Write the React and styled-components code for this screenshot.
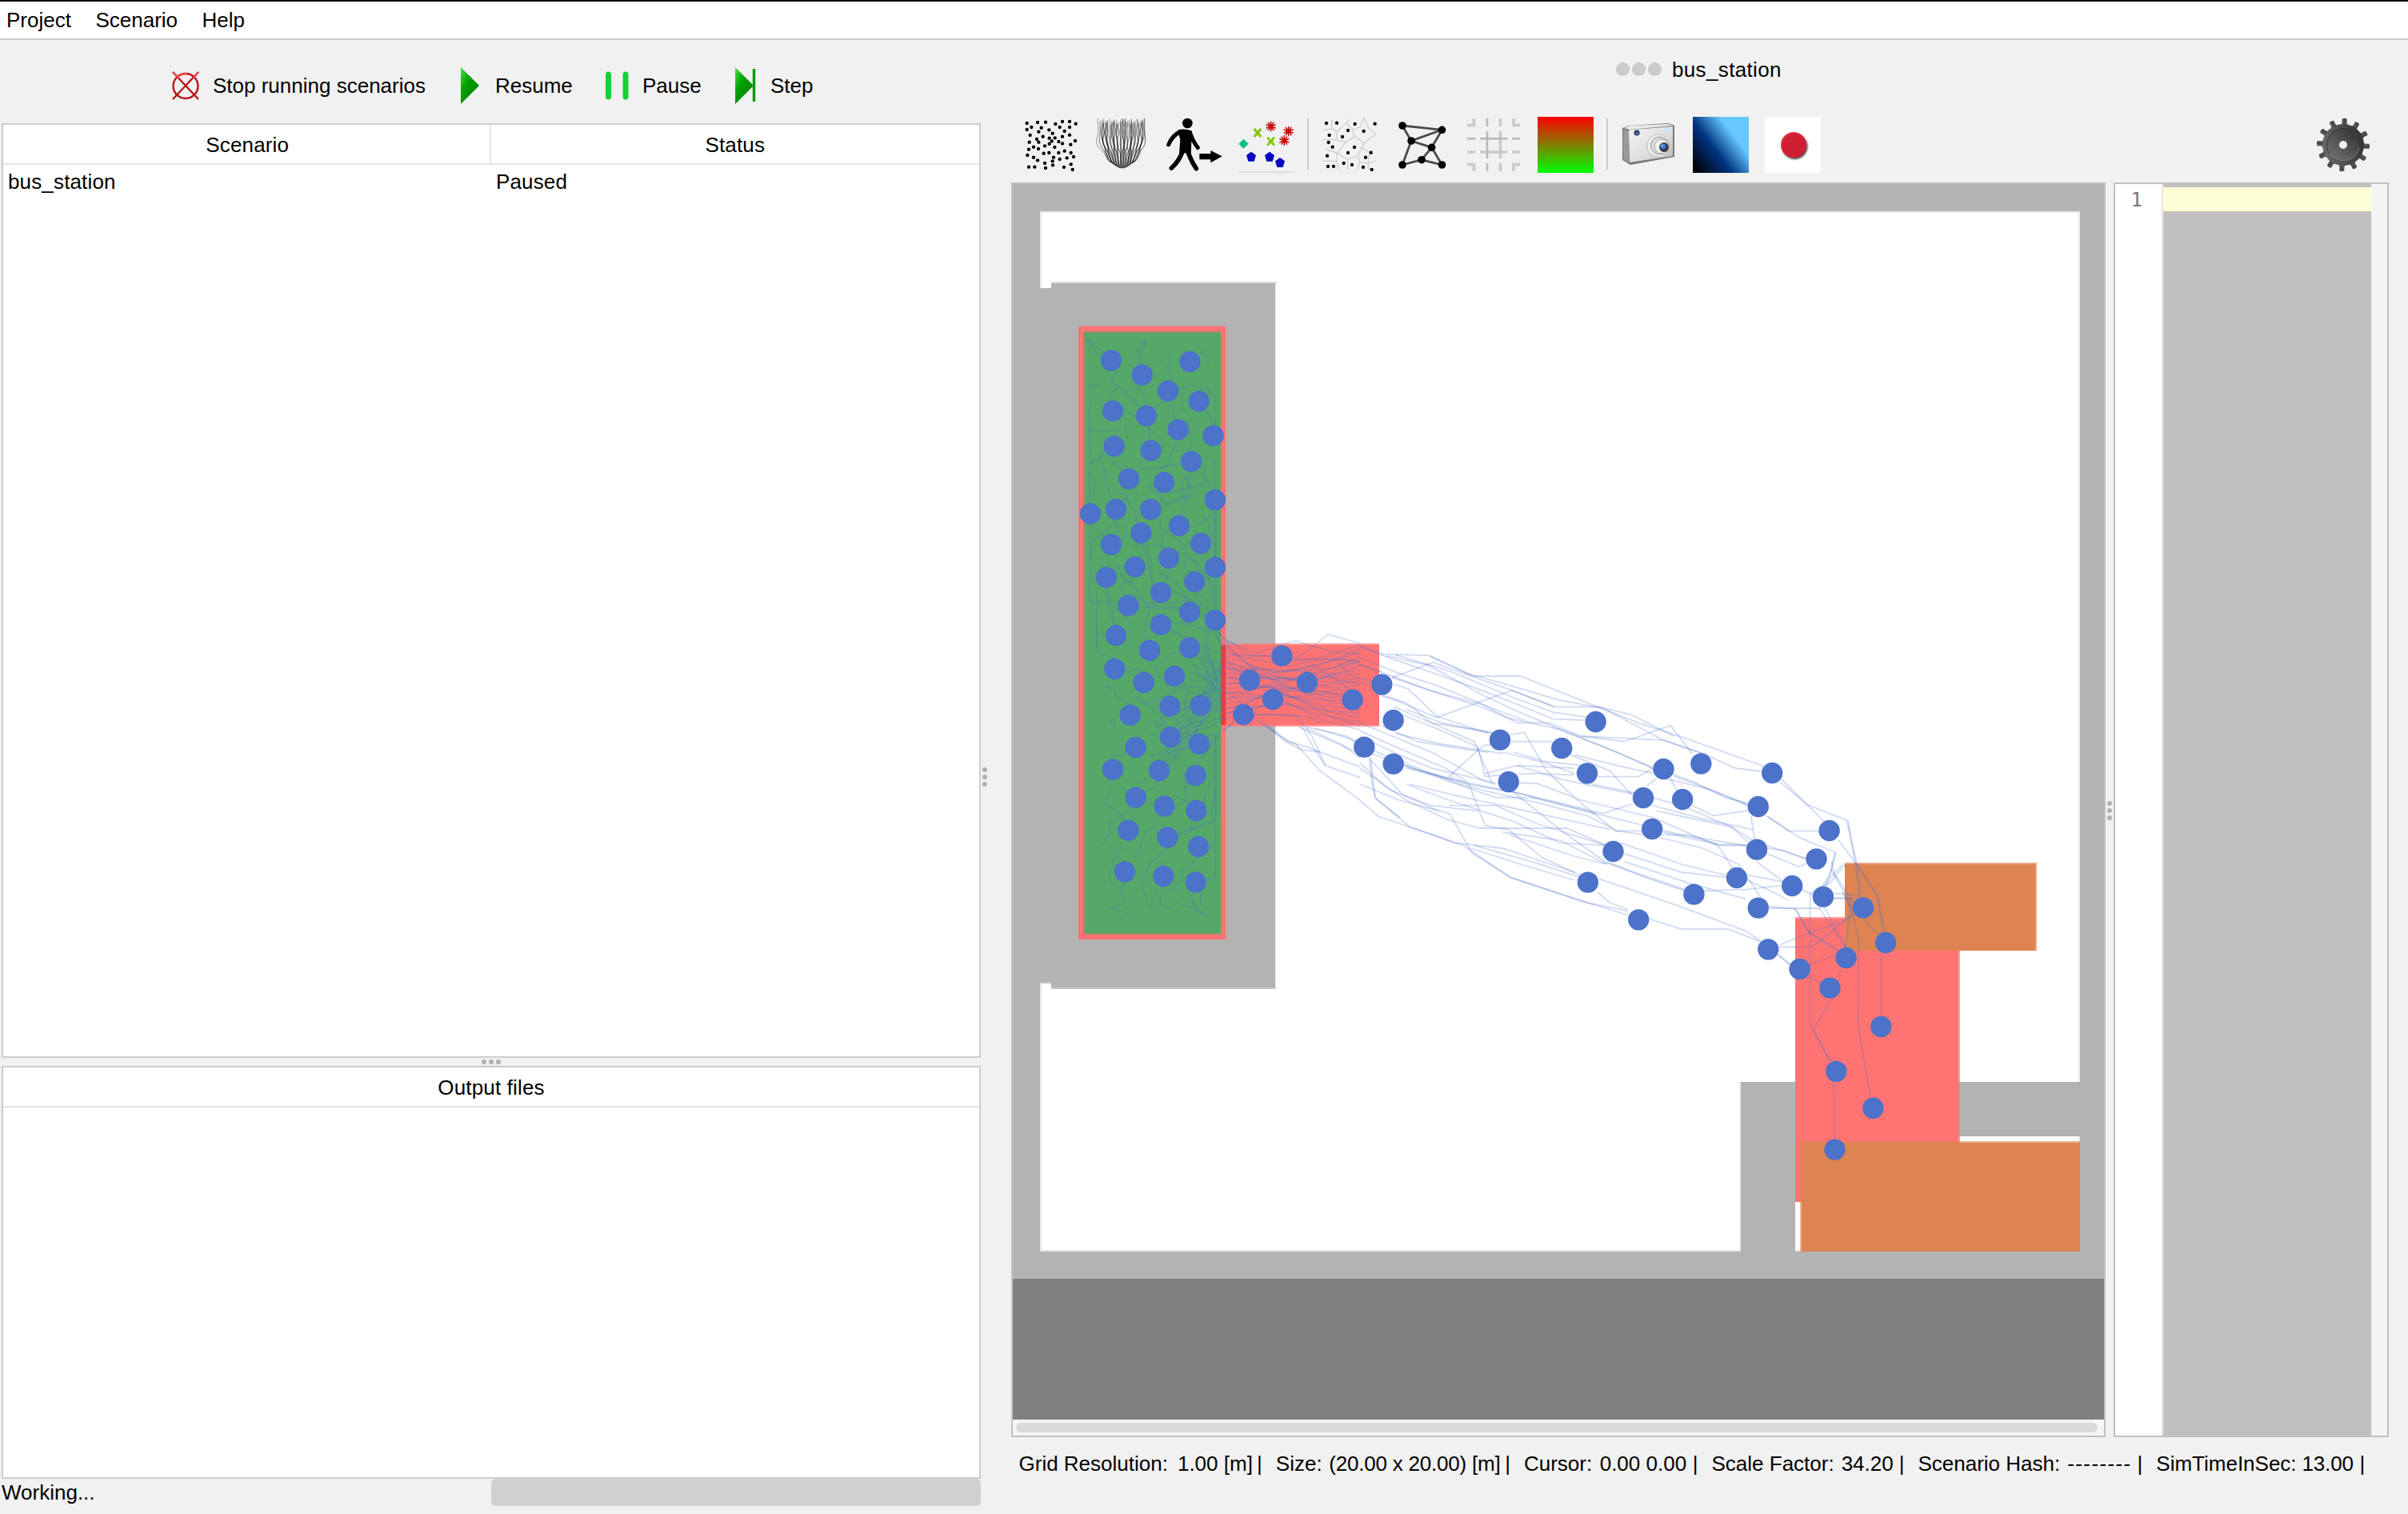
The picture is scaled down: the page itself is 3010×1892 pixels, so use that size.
import React from "react";
import styled, { createGlobalStyle } from "styled-components";

const GlobalStyle = createGlobalStyle`
  html, body { margin: 0; padding: 0; background: #f1f1f1; }
  * { box-sizing: border-box; }
`;

const Window = styled.div`
  width: 3010px;
  height: 1892px;
  overflow: hidden;
  display: flex;
  flex-direction: column;
  background: #f1f1f1;
  border-top: 2px solid #000;
  color: #000;
  font: 26px/30px "Liberation Sans", Arial, sans-serif;
  white-space: pre;
`;

const MenuBar = styled.nav`
  display: flex;
  height: 48px;
  flex: none;
  padding: 8px 0 0 8px;
  gap: 30.5px;
  background: #fff;
  border-bottom: 2px solid #cdcdcd;
`;

const Body = styled.div`
  display: flex;
  flex: 1;
  min-height: 0;
`;

const LeftPane = styled.section`
  width: 1228px;
  padding: 0 2px 0 2px;
  display: flex;
  flex-direction: column;
`;

const RunBar = styled.div`
  height: 104px;
  display: flex;
  align-items: center;
  padding: 10px 0 0 212px;
`;

const RunButton = styled.div`
  display: flex;
  align-items: center;
  width: ${(p) => p.$width}px;
  svg { flex: none; margin-right: ${(p) => p.$gap}px; }
`;

const Table = styled.div`
  height: ${(p) => p.$height}px;
  flex: none;
  display: flex;
  flex-direction: column;
  background: #fff;
  border: 2px solid #cdcdcd;
  letter-spacing: 0.15px;
`;

const HeadRow = styled.div`
  height: 50px;
  display: flex;
  border-bottom: 2px solid #e4e4e4;
`;

const HeadCell = styled.div`
  flex: 1;
  padding-top: 10px;
  text-align: center;
  & + & { border-left: 2px solid #e4e4e4; margin-left: -3px; }
`;

const Row = styled.div`
  display: flex;
  padding-top: 6px;
`;

const Cell = styled.div`
  flex: 1;
  padding-left: 6px;
`;

const SplitHandle = styled.div`
  flex: none;
  display: flex;
  flex-direction: ${(p) => (p.$vertical ? "column" : "row")};
  align-items: center;
  justify-content: center;
  gap: 3px;
  width: ${(p) => (p.$vertical ? p.$size + "px" : "auto")};
  height: ${(p) => (p.$vertical ? "auto" : p.$size + "px")};
  padding-top: ${(p) => p.$shift || 0}px;
  i { width: 6px; height: 6px; border-radius: 3px; background: #b0b0b0; }
`;

const ProgressRow = styled.div`
  display: flex;
  height: 34px;
  span { width: 612px; padding-top: 2px; }
`;

const Progress = styled.div`
  flex: 1;
  height: 34px;
  border-radius: 6px;
  background: #d0d0d0;
`;

const RightPane = styled.section`
  flex: 1;
  padding-left: 30px;
  display: flex;
  flex-direction: column;
`;

const TitleBar = styled.div`
  height: 96px;
  padding: 22px 0 0 756px;
  display: flex;
  gap: 3px;
  letter-spacing: 0.35px;
  i { width: 17px; height: 17px; margin-top: 6px; border-radius: 50%; background: #cbcbcb; }
  span { margin-left: 10px; }
`;

const ToolBar = styled.div`
  height: 82px;
  padding: 0 46px 0 14px;
  display: flex;
  gap: 20px;
  svg { display: block; width: 70px; height: 70px; flex: none; }
`;

const ToolDivider = styled.div`
  width: 2px;
  height: 64px;
  margin: 2px -4px 0;
  background: #cbcbcb;
`;

const Spacer = styled.div`
  flex: 1;
`;

const GradientTile = styled.div`
  width: 70px;
  height: 70px;
  background: ${(p) => p.$fill};
`;

const Views = styled.div`
  display: flex;
  height: 1568px;
`;

const Canvas = styled.div`
  width: 1368px;
  display: flex;
  flex-direction: column;
  border: 2px solid #c0c0c0;
  background: #808080;
  > svg { display: block; }
`;

const ScrollTrack = styled.div`
  height: 20px;
  margin-top: 176px;
  padding: 4px 8px 4px 4px;
  background: #f5f5f5;
`;

const ScrollThumb = styled.div`
  height: 12px;
  border-radius: 6px;
  background: #dbdbdb;
`;

const Editor = styled.div`
  width: 344px;
  display: flex;
  border: 2px solid #c0c0c0;
`;

const Gutter = styled.div`
  width: 59px;
  padding: 6px 24px 0 0;
  text-align: right;
  background: #fff;
  border-right: 1px solid #dcdcdc;
  color: #787878;
  font: 24px/28px "DejaVu Sans Mono", monospace;
`;

const Code = styled.div`
  flex: 1;
  padding-top: 4px;
  margin-left: 1px;
  background: #c0c0c0;
`;

const ActiveLine = styled.div`
  height: 30px;
  background: #ffffd7;
`;

const EditorScroll = styled.div`
  width: 20px;
  background: #f5f5f5;
`;

const StatusBar = styled.footer`
  display: flex;
  gap: 17px;
  padding: 18px 0 0 9.5px;
`;

const StatusItem = styled.div`
  display: flex;
  flex: none;
`;

const StatusText = styled.div`
  width: ${(p) => p.$width}px;
  display: flex;
  gap: ${(p) => p.$gap}px;
`;

const StatusValue = styled.span`
  letter-spacing: ${(p) => p.$tracking}px;
`;

/* ---------- toolbar icons ---------- */

const StopIcon = () => (
  <svg width="36" height="38" viewBox="0 0 36 38" fill="none" stroke="#b81414" strokeWidth="2.4">
    <circle cx="18" cy="19.5" r="15.5" />
    <path d="M2 2 34 36M34 2 2 36" />
    <path d="M2 2 10 10M34 2 28 9M9 7Q14 4 20 4" stroke="#ea4a4a" />
  </svg>
);

const PlayIcon = ({ step }) => (
  <svg width="28" height="48" viewBox="0 0 28 48">
    <defs>
      <linearGradient id="play" x1="0" y1="0" x2="0.6" y2="0.6">
        <stop offset="0" stopColor="#4be04b" />
        <stop offset="0.6" stopColor="#04a304" />
        <stop offset="1" stopColor="#009000" />
      </linearGradient>
    </defs>
    <path d="M1 1 24 24 1 47Z" fill="url(#play)" />
    {step && <path d="M24.5 3V44" stroke="#069a06" strokeWidth="3.4" />}
  </svg>
);

const PauseIcon = () => (
  <svg width="32" height="38" viewBox="0 0 32 38" stroke="#18cf34" strokeWidth="7" strokeLinecap="round">
    <path d="M4.500 5V33M26 5V33" />
  </svg>
);

const SWARM = [
  [41, 42], [58, 57], [81, 39], [111, 38], [148, 45], [174, 36], [201, 36], [224, 44], [41, 66], [95, 59],
  [164, 57], [201, 57], [85, 74], [124, 67], [182, 72], [53, 87], [101, 92], [137, 80], [146, 97], [201, 86],
  [174, 92], [125, 98], [78, 102], [50, 113], [85, 113], [134, 109], [160, 111], [222, 108], [174, 118],
  [205, 122], [125, 119], [108, 127], [145, 132], [66, 131], [84, 138], [48, 140], [182, 146], [124, 153],
  [104, 155], [160, 153], [206, 153], [43, 162], [66, 170], [216, 168], [81, 181], [141, 170], [164, 177],
  [191, 172], [137, 184], [108, 192], [111, 210], [206, 196], [138, 199], [180, 207], [48, 206], [70, 206],
  [212, 216],
];

const SwarmIcon = () => (
  <svg viewBox="24 18 210 210">
    {SWARM.map(([x, y], i) => <circle key={i} cx={x} cy={y} r="6.5" />)}
  </svg>
);

const strand = (i) => {
  const side = (i / 45 - 0.5) * 2;
  const top = 24 + ((i * 31) % 22);
  const x = 398 + side * 86 + ((i * 13) % 9) - 4;
  const w = ((i * 19) % 15) - 7;
  const ex = 398 + side * 40;
  const ey = 211 - side * side * 26;
  return `M${x} ${top} C${x + w} ${top + 20} ${x - w} ${top + 34} ${x + side * 2} 88 S${x + w * 1.4 - side * 6} 128 ${x - side * 14} 144 S${ex + side * 16} 190 ${ex} ${ey}`;
};

const TrailsIcon = () => (
  <svg viewBox="294 18 210 210" fill="none" stroke="#000" strokeWidth="2.4">
    {Array.from({ length: 46 }, (_, i) => (
      <path key={i} d={strand(i)} opacity={0.45 + ((i * 7) % 5) * 0.1} />
    ))}
  </svg>
);

const WalkerIcon = () => (
  <svg viewBox="564 18 210 210">
    <circle cx="643" cy="42" r="19" />
    <g fill="none" stroke="#000" strokeLinecap="round" strokeLinejoin="round">
      <path d="M616 74Q588 86 572 122" strokeWidth="15" />
      <path d="M652 76Q664 112 682 134" strokeWidth="15" />
      <path d="M624 148Q612 184 583 210" strokeWidth="17" />
      <path d="M644 148Q660 190 676 212" strokeWidth="17" />
    </g>
    <path d="M606 68Q634 60 660 72L656 154 612 154 616 104Z" />
    <path d="M688 156H730V144L773 166 730 190V178H688Z" />
  </svg>
);

const Star = ({ x, y }) => (
  <path
    transform={`translate(${x} ${y})`}
    d="M0-19V19M-18-7 18 7M-18 7 18-7M-11-15 11 15M11-15-11 15"
    stroke="#c90000"
    strokeWidth="4.600"
  />
);

const GroupsIcon = () => (
  <svg viewBox="834 18 210 210">
    <Star x={956} y={54} />
    <Star x={1022} y={72} />
    <Star x={1006} y={107} />
    {[[906, 78], [956, 110]].map(([x, y]) => (
      <path key={x} d={`M${x - 13} ${y - 15}l26 30m0-30l-26 30M${x - 8} ${y}h16`} stroke="#84c400" strokeWidth="8.500" />
    ))}
    <path d="M853 101 872 119 853 137 835 119Z" fill="#08bf86" />
    {[[882, 168], [951, 168], [990, 190]].map(([x, y]) => (
      <path key={x} d={`M${x} ${y - 19}l18 13-7 23h-22l-7-23Z`} fill="#0404c0" />
    ))}
    <path d="M834 225H1044" stroke="#dedede" strokeWidth="6" />
  </svg>
);

const VORONOI_SITES = [
  [1164, 42], [1203, 41], [1271, 45], [1346, 44], [1245, 69], [1304, 72], [1175, 87], [1224, 93], [1172, 114],
  [1187, 131], [1269, 132], [1167, 164], [1245, 153], [1331, 152], [1311, 170], [1170, 204], [1191, 204],
  [1229, 192], [1260, 198], [1302, 207], [1334, 216],
];

const VoronoiIcon = () => (
  <svg viewBox="1146 18 210 210">
    <path
      fill="none"
      stroke="#cfcfcf"
      strokeWidth="4"
      d="M1184 30V62L1152 68M1184 62 1204 74 1252 28M1204 74 1200 104 1150 104M1240 44 1262 66 1290 56 1305 22 1318 54 1349 84 1305 116 1270 92 1262 66M1200 104 1236 112 1270 92M1236 112 1204 154 1160 138M1204 154 1244 178 1282 162 1296 134 1305 116M1296 134 1326 150 1320 190 1349 184M1204 154 1202 184 1150 184M1202 184 1212 216M1244 178V216M1282 162 1290 190 1280 216M1290 190 1320 190 1322 216"
    />
    {VORONOI_SITES.map(([x, y], i) => <circle key={i} cx={x} cy={y} r="6.5" />)}
  </svg>
);

const NETWORK = [[11, 11], [60.5, 16.3], [22, 30], [47.6, 38.3], [35, 53.7], [11, 60], [60.5, 60]];
const NETWORK_EDGES = [[0, 1], [0, 2], [1, 2], [1, 3], [2, 3], [2, 5], [3, 6], [3, 4], [4, 5], [4, 6]];

const NetworkIcon = () => (
  <svg viewBox="0 0 70 70">
    {NETWORK_EDGES.map(([a, b]) => (
      <path key={`${a}${b}`} d={`M${NETWORK[a]}L${NETWORK[b]}`} stroke="#4a4a4a" strokeWidth="2.8" />
    ))}
    {NETWORK.map(([x, y]) => <circle key={`${x}${y}`} cx={x} cy={y} r="4.8" />)}
  </svg>
);

const GridIcon = () => (
  <svg viewBox="0 0 70 70" fill="none" strokeWidth="3.6">
    <path stroke="#cacaca" d="M2 10.5H10.5V2M60 2V10.5H68M2 59.500H10.5V68M68 59.500H60V68M2 44H12M18 44H52M58 44H68M43.500 2V12M43.500 18V52M43.500 58V68" />
    <path stroke="#b8b8b8" strokeWidth="2.600" d="M27 2V12M27 18V52M27 58V68M2 27.300H12M18 27.300H52M58 27.300H68" />
  </svg>
);

const CameraIcon = () => (
  <svg viewBox="0 0 70 70">
    <defs>
      <linearGradient id="cam" x1="0" y1="0" x2="1" y2="1">
        <stop offset="0" stopColor="#f6f6f6" />
        <stop offset="0.6" stopColor="#dcdcdc" />
        <stop offset="1" stopColor="#b4b4b4" />
      </linearGradient>
    </defs>
    <path d="M2 14 10 11 60 8 67 11V50L12 60 2 54Z" fill="#777" />
    <path d="M3 15 10 18V58L3 53Z" fill="#9a9a9a" />
    <path d="M4 14 12 11 60 9 65 11 11 16Z" fill="#e9e9e9" />
    <path d="M10 16.500 65 12V49L11 57Z" fill="url(#cam)" />
    <rect x="53" y="14" width="10" height="5" fill="#cfe4fa" />
    <circle cx="20" cy="20" r="3.6" fill="#333b55" />
    <circle cx="20" cy="20.500" r="1.700" fill="#3d78d0" />
    <circle cx="47" cy="36" r="14" fill="#f1f1f1" stroke="#bdbdbd" />
    <circle cx="48.500" cy="36" r="11" fill="#dedede" stroke="#8c8c8c" />
    <circle cx="51" cy="37" r="9" fill="#efefef" stroke="#a4a4a4" />
    <circle cx="54" cy="38" r="5.900" fill="#383838" />
    <circle cx="53" cy="37" r="3.500" fill="#3474dc" />
    <circle cx="51.800" cy="36" r="1.200" fill="#a8ccff" />
  </svg>
);

const RecordIcon = () => (
  <svg viewBox="0 0 70 70">
    <defs>
      <filter id="soft"><feGaussianBlur stdDeviation="1.2" /></filter>
    </defs>
    <rect width="70" height="70" fill="#fff" />
    <circle cx="37.500" cy="37" r="16" fill="#444" filter="url(#soft)" />
    <circle cx="36" cy="35" r="16" fill="#e8344a" />
    <circle cx="36.600" cy="35.800" r="15" fill="#cf2033" />
  </svg>
);

const GearIcon = () => (
  <svg viewBox="0 0 70 70">
    <defs>
      <linearGradient id="gear" x1="0" y1="0.6" x2="1" y2="0.4">
        <stop offset="0" stopColor="#6a6a6a" />
        <stop offset="1" stopColor="#333" />
      </linearGradient>
      <linearGradient id="disc" x1="0.1" y1="1" x2="0.8" y2="0.2">
        <stop offset="0" stopColor="#747474" />
        <stop offset="1" stopColor="#3c3c3c" />
      </linearGradient>
    </defs>
    <g fill="url(#gear)">
      {Array.from({ length: 12 }, (_, i) => (
        <path key={i} transform={`rotate(${3 + i * 30} 35 35)`} d="M29.500 12 32 8V2.500Q35 1 38 2.500V8L40.500 12Z" />
      ))}
      <circle cx="35" cy="35" r="26" />
    </g>
    <circle cx="35" cy="35" r="20.500" fill="url(#disc)" stroke="#3a3a3a" />
    <path d="M18 46A20.500 20.500 0 0 0 55 38" fill="none" stroke="#777" strokeWidth="1.200" />
    <circle cx="35" cy="35" r="5" fill="#f1f1f1" />
  </svg>
);

/* ---------- topography ---------- */

const PALETTE = { wall: "#b3b3b3", target: "#ff7373", source: "#55a868", stairs: "#dd8452", agent: "#4c72ca" };

// Each sector stores its points in local units: origin plus units per pixel.
const SECTORS = {
  north: { x: 1250, y: 330, sx: 3, sy: 3 },
  south: { x: 1250, y: 780, sx: 3, sy: 3 },
  field: { x: 1700, y: 760, sx: 2.24, sy: 3 },
  exit: { x: 2100, y: 900, sx: 2.904, sy: 2.24 },
};

const AGENTS = {
  north: "417,361 533,415 712,366 630,476 746,514 423,550 549,569 668,621 800,643 428,683 566,699 717,740 483,805 615,819 807,884 339,936 435,919 565,920 672,981 529,1008 417,1051 753,1047 633,1102 506,1135 399,1174 807,1137 730,1191 603,1231 481,1280 711,1305 603,1352 807,1335 435,1392",
  south: "561,98 711,88 430,168 654,195 539,219 752,304 637,308 488,341 639,423 747,449 509,462 423,545 597,549 734,567 509,650 616,682 736,699 481,773 628,799 744,834 468,928 613,945 734,967 1057,119 936,210 1152,219 1023,282 913,339 1322,284 1432,226 1475,360 1366,461 1475,524",
  field: "392,494 660,426 565,525 636,619 416,651 850,603 955,583 1154,618 793,711 903,717 1115,744 818,828 709,912 1111,905 1314,834 1278,940 1055,1011 1210,1041 1297,1082 638,1028 935,1073 1115,1124 1409,1123 780,1168 1143,1279 1231,1353 1361,1311 1472,1254 1316,1424",
  exit: "567,983 701,1086 562,1202 730,858",
};

const TRAILS = {
  north: [
    "325,280 345,310 375,345 417,361", "325,280 360,305 400,340", "533,415 515,330 548,285 525,298", "548,285 530,350 533,415",
    "712,366 765,325 783,375", "632,335 640,365 628,385 640,430 630,476", "417,361 430,420 418,440 440,460 410,495 423,550",
    "425,440 520,530 549,569", "533,415 515,465 540,490 545,530 549,569", "375,460 333,453 340,500 333,600 340,760 333,860 339,936",
    "333,622 440,626 423,660", "460,540 510,575", "670,470 710,455 780,470 805,500 807,640", "680,480 688,550",
    "570,540 620,515 650,540 655,570 668,621", "549,610 580,630 610,670 600,710", "560,610 562,660", "470,600 478,650 460,690",
    "746,514 780,560 800,600", "710,585 715,700 717,740", "668,660 650,690 630,750 600,765 525,770 530,735", "400,705 340,750",
    "380,700 375,740 395,780 400,830 435,919", "420,735 460,775 483,805", "717,740 600,765", "755,728 805,735 807,884",
    "333,780 355,820 350,890", "615,819 560,835 620,895 720,865 700,790 680,830 688,880", "630,855 770,825 765,760",
    "717,780 690,900 672,981", "765,790 800,850", "483,845 475,880 440,900", "455,850 510,935 515,980 529,1008", "510,850 520,870",
    "610,860 600,960 610,1060 633,1102", "610,910 720,865", "339,975 340,1100 335,1250 345,1270 440,1268", "339,975 370,1000 395,1030",
    "435,960 395,1000 350,1040 335,1100", "435,960 440,1000 417,1051", "470,970 470,1020 440,1060", "760,940 780,970 800,1040",
    "740,980 800,935 807,1137", "615,1000 700,1060 690,1130 730,1191", "500,1055 600,1050 640,1100", "529,1045 550,1090 520,1100",
    "383,1090 380,1140", "506,1135 440,1130 465,1180 500,1200", "560,1095 575,1230", "545,1040 555,1080 560,1160 575,1200",
    "600,1130 600,1160 660,1190 720,1290 760,1330", "700,1090 750,1130 800,1200 807,1335", "710,1100 780,1180 805,1270",
    "807,920 807,1100", "809,920 809,1335", "399,1210 420,1300 435,1392", "345,1180 400,1220 410,1290 425,1345",
    "481,1280 450,1200 490,1190", "490,1190 560,1290 640,1290 711,1305", "480,1230 550,1270 640,1270 710,1260",
    "363,1230 363,1440", "435,1290 490,1340 490,1440", "520,1290 580,1280 700,1290 807,1335", "730,1230 755,1280 807,1310",
    "640,1340 700,1350 790,1380", "603,1231 560,1300 540,1390 561,1430", "640,1370 700,1400 711,1440", "760,1300 790,1340 830,1390",
    "700,1040 760,1110 807,1137", "680,1060 640,1140 620,1190", "750,1240 800,1280", "630,1220 700,1250 760,1290", "380,1380 410,1400",
  ],
  south: [
    "363,0 365,105 430,130 470,170 539,219", "385,240 405,230 420,245 400,240", "430,230 430,265 488,300", "425,350 430,390 415,360",
    "475,160 530,175 600,200", "500,270 560,305 600,340 639,423", "530,280 550,300 640,260 700,230", "580,370 640,330 752,304",
    "555,415 639,423 700,380 790,350", "580,370 639,440 660,470", "470,490 430,490 423,545", "565,500 660,450 740,400 800,380 850,350",
    "423,585 410,630 388,668 460,720 481,773", "480,690 450,730 410,745 415,780 370,843", "560,570 520,600 509,650", "509,650 590,605 605,560",
    "500,690 500,740", "580,720 580,760 550,770 525,840 500,885", "590,540 600,490 700,460 800,410", "734,567 695,600 700,660 650,690",
    "650,640 700,670 736,699", "690,560 700,640", "800,570 765,660 770,700", "805,410 807,955 775,957", "809,410 809,740",
    "807,620 790,740 720,765 660,790", "720,740 715,775 628,820", "790,830 805,810", "807,740 700,775", "460,830 430,870 410,950 420,980 440,980",
    "490,830 460,860", "468,960 450,1000 465,1030 460,1050 415,1065 495,1090 485,1108", "628,840 560,900 550,940 530,970 535,1000 555,1030",
    "610,880 610,945", "585,990 560,1060", "613,985 598,1040 620,1065 640,1065", "740,870 720,905 680,930 690,950 630,1005",
    "722,1005 722,1040 770,1095", "752,1005 752,1055", "660,1045 740,1070 770,1098", "720,1040 735,1080", "734,530 780,470 830,400 880,370",
    "747,449 700,410 720,350 752,304", "650,510 690,420 660,350", "700,120 760,200 810,240", "680,180 700,260 690,330", "600,150 640,110 711,88",
    "560,140 600,190 640,250", "750,120 780,180 820,190", "790,150 770,200 790,260", "637,350 600,380 580,370", "790,0 850,60 940,120 1057,119",
    "807,30 830,80 880,115 1010,118", "810,40 860,150 936,210", "820,30 880,110 940,160 1020,190 1152,219", "820,60 900,120 980,190 1100,170 1170,155",
    "850,60 960,110 1057,75 1110,62 1150,75 1250,105 1350,110", "1050,150 1140,110 1230,38 1350,72",
    "1095,130 1300,132 1350,142", "1070,160 1220,130 1350,140", "913,339 1060,338 1160,350 1200,370",
    "950,340 1110,342 1170,420 1220,530 1350,575", "950,350 1050,420 1110,450 1200,550 1350,660", "980,360 1080,440 1150,460 1350,535",
    "1000,380 1070,440 1130,470 1200,480", "1385,500 1395,600 1410,655 1500,725", "1130,380 1180,470 1220,530",
    "1190,210 1330,145 1432,180", "1170,150 1280,220 1340,270", "1260,145 1330,200 1400,215", "1060,250 1230,255 1322,284",
    "1020,205 1200,190 1330,220 1432,226", "830,150 880,180 960,170", "830,250 860,260 910,300", "840,400 870,370 913,339",
    "1120,385 1200,420 1340,480", "1150,385 1250,410 1340,440", "1150,390 1280,450 1350,500", "1180,390 1300,420 1350,455",
  ],
  field: [
    "0,137 60,172 193,177 318,255 450,255 665,370 780,430 905,485 1115,585 1154,610", "0,145 90,190 210,245 345,310 420,350 540,415 630,420",
    "75,178 193,215 350,330 430,380 560,455 720,540 820,600", "100,175 250,235 420,330 540,390 640,410", "195,180 300,245 420,290 560,345 680,375 850,495 970,550 1050,600 1125,612",
    "90,260 205,203 300,250 430,310 545,370 670,370 760,400 880,480", "0,185 110,245 215,290 335,355 440,430 530,430 620,480 740,500 870,440 930,545",
    "0,210 100,260 220,320 340,370 410,410 560,455 700,530 830,605", "90,260 200,310 340,360 460,420",
    "95,285 135,303 215,405 360,470", "60,330 90,340 215,410 425,308 545,370", "50,320 130,355 200,430 370,465", "620,480 850,495 970,550",
    "95,370 200,430 320,500 370,655", "120,400 230,460 330,520 350,630 480,620 600,625", "380,510 345,515 250,630 305,660 350,815 415,830 510,935 615,1000",
    "420,475 460,465 520,605 600,710 715,835 800,835", "420,500 540,500", "30,560 42,710 140,820 265,880 400,900 600,990", "0,720 50,780 150,825 290,890 420,1010 600,1090 750,1150",
    "0,660 110,720 250,770 315,920 425,1010 640,1105 750,1135", "0,600 130,720 240,790 335,825 580,825 690,890", "20,540 160,605 300,660 430,690 560,830 690,955 910,1055",
    "250,740 380,740 500,810 690,890", "90,560 200,620 290,665 400,700 500,730 640,780 720,835 800,850 920,850 1000,885 1055,1000", "130,600 250,640 430,690 560,730 680,770 760,735",
    "130,590 250,650 380,710 480,710 660,770 750,800 900,850 1080,890", "440,655 495,657 620,720 820,785 1000,890 1110,890", "650,660 760,690 900,740 1040,820 1090,880",
    "665,632 780,632 820,600", "430,540 520,575 620,590", "400,540 520,580 600,620", "600,550 720,590 820,620", "590,550 700,610 760,700", "420,685 520,720 660,770",
    "800,670 830,640", "870,640 890,690", "880,630 1000,690 1090,740", "870,620 940,655 1020,710 1100,735", "860,640 980,680 1095,745", "930,740 990,778 1090,758",
    "830,760 900,780 1040,820 1110,880", "820,740 960,790 1100,830", "1095,780 1105,870", "1140,780 1200,835 1290,835", "1140,780 1230,860 1330,915 1315,1000 1290,1050", "1175,650 1250,735 1362,795 1390,950 1400,1085",
    "1180,640 1300,800", "1340,870 1390,960 1450,1080 1468,1220", "1140,900 1190,910 1250,940", "1140,890 1260,945", "1140,920 1230,970 1260,950", "1110,950 1200,1040",
    "850,840 1000,885 1130,890", "840,860 960,900 1060,960 1130,1100", "730,880 900,960 1050,1010", "740,920 900,990 1030,1010", "740,950 920,1030 1080,1090", "690,950 800,1010 910,1060",
    "960,1060 1080,1055 1180,1040", "1085,1020 1150,1060 1200,1095", "1085,1000 1200,1030", "670,1015 900,1120 1080,1210 1125,1250", "665,1065 700,1105 750,1130", "810,1165 900,1203 1030,1203 1120,1250",
    "1145,1118 1220,1128 1260,1220 1350,1300", "1145,1125 1290,1125", "1300,1120 1360,1270", "1230,1050 1290,1090 1400,1085", "1320,950 1330,1000 1390,1120", "1350,960 1300,1040", "1170,1300 1210,1340",
    "0,430 90,480 200,540 350,650 380,660", "0,460 100,520 240,600 300,650", "0,480 110,550 200,600 380,655", "60,440 160,500 300,530 360,540", "100,470 230,510 400,545", "130,380 230,430 370,470", "20,520 140,600 260,640", "30,570 120,700 220,760", "0,580 80,680 200,740 330,760",
    "140,660 260,700 430,750 600,800 700,830", "130,660 250,720 430,800 560,880 690,890", "400,840 560,870 690,960", "420,850 600,930 690,960", "320,890 480,950 620,1010", "310,900 450,960 600,1020", "440,590 560,640 700,680 780,700", "350,620 440,590 600,600",
  ],
  exit: [
    "472,485 472,855 545,955", "472,485 545,455 600,403", "550,780 485,865 545,955", "580,700 578,730", "555,1010 560,1050 560,1175", "729,650 729,830",
    "647,600 648,860 690,1050", "610,500 647,605", "610,280 655,490", "640,400 715,490 740,590", "665,555 720,600", "550,420 605,495 625,530", "567,370 545,430 530,465", "560,485 650,490",
    "560,498 620,500 605,610 600,640", "590,480 630,545 600,560 470,595 360,630", "630,545 600,560 480,635 360,635", "415,525 470,595 570,640", "505,525 600,635", "470,685 560,658", "465,718 510,735", "355,655 400,685",
  ],
};

const toPixels = (name, text) => {
  const s = SECTORS[name];
  return text.split(" ").map((pair) => {
    const [u, v] = pair.split(",").map(Number);
    return [s.x + u / s.sx, s.y + v / s.sy];
  });
};

// The stream of pedestrians that squeezes through the door.
const stream = Array.from({ length: 22 }, (_, i) => {
  const a = ((i * 13) % 22) / 21;
  const b = ((i * 9) % 22) / 21;
  const c = i / 21;
  return [
    [1440 + 70 * b, 770 + 210 * a],
    [1490 + 20 * b, 805 + 120 * a],
    [1528, 816 + 84 * c],
    [1590 + 20 * b, 828 + 58 * ((c + b) / 2)],
    [1640 + 30 * a, 824 + 76 * c],
    [1700, 806 + 106 * c],
  ];
});

const trailPoints = [
  ...Object.entries(TRAILS).flatMap(([name, list]) => list.map((t) => toPixels(name, t))),
  ...stream,
];
const agentPoints = Object.entries(AGENTS).flatMap(([name, list]) => toPixels(name, list));

const Box = ({ x, y, r, b, fill, opacity }) => (
  <rect x={x} y={y} width={r - x} height={b - y} fill={fill} opacity={opacity} />
);

const Topography = () => (
  <svg width="1364" height="1368" viewBox="1266 230 1364 1368">
    <Box x={1266} y={230} r={2630} b={1598} fill={PALETTE.wall} />
    <Box x={1300} y={264} r={2600} b={1564} fill="#e9e9e9" />
    <Box x={1302} y={266} r={2598} b={1562} fill="#fff" />
    <Box x={1300} y={360} r={1316} b={1228} fill={PALETTE.wall} />
    <Box x={1300} y={1228} r={1314} b={1230} fill="#dedede" />
    <Box x={1314} y={352} r={1596} b={354} fill="#d9d9d9" />
    <Box x={1594} y={354} r={1596} b={1236} fill="#f4f4f4" />
    <Box x={1314} y={1234} r={1594} b={1236} fill="#c6c6c6" />
    <Box x={1314} y={354} r={1594} b={1234} fill={PALETTE.wall} />
    <Box x={2174} y={1352} r={2176} b={1564} fill="#f0f0f0" />
    <Box x={2176} y={1352} r={2244} b={1564} fill={PALETTE.wall} />
    <Box x={2448} y={1352} r={2600} b={1420} fill={PALETTE.wall} />
    <Box x={1348} y={406} r={1532} b={408} fill="#c2a9a9" />
    <Box x={1532} y={408} r={1534} b={1174} fill="#c4a8a8" />
    <Box x={1348} y={408} r={1532} b={1174} fill={PALETTE.target} />
    <Box x={1526} y={804} r={1724} b={908} fill={PALETTE.target} opacity={0.7} />
    <Box x={1526} y={806} r={1724} b={906} fill={PALETTE.target} />
    <Box x={1526} y={806} r={1532} b={906} fill="#ff3535" />
    <Box x={1354} y={414} r={1526} b={1168} fill="#a08c6c" />
    <Box x={1356} y={416} r={1526} b={1166} fill={PALETTE.source} />
    <Box x={2244} y={1146} r={2450} b={1502} fill={PALETTE.target} opacity={0.7} />
    <Box x={2244} y={1148} r={2448} b={1502} fill={PALETTE.target} />
    <Box x={2306} y={1078} r={2546} b={1188} fill={PALETTE.stairs} opacity={0.7} />
    <Box x={2306} y={1080} r={2544} b={1188} fill={PALETTE.stairs} />
    <Box x={2250} y={1426} r={2600} b={1564} fill={PALETTE.stairs} opacity={0.6} />
    <Box x={2252} y={1428} r={2600} b={1564} fill={PALETTE.stairs} />
    <g fill="none" stroke={PALETTE.agent} strokeOpacity="0.26" strokeWidth="1.8">
      {trailPoints.map((pts, i) => <path key={i} d={`M${pts.map((p) => p.join(" ")).join("L")}`} />)}
    </g>
    <g fill={PALETTE.agent}>
      {agentPoints.map(([x, y], i) => <circle key={i} cx={x} cy={y} r="13.2" />)}
    </g>
  </svg>
);

const STATUS = [
  { label: "Grid Resolution:", value: "1.00 [m]", width: 297.6, gap: 12, tracking: 0 },
  { label: "Size:", value: "(20.00 x 20.00) [m]", width: 286.3, gap: 8.5, tracking: -0.2 },
  { label: "Cursor:", value: "0.00 0.00", width: 210.8, gap: 9.5, tracking: 0 },
  { label: "Scale Factor:", value: "34.20", width: 234.2, gap: 9, tracking: 0 },
  { label: "Scenario Hash:", value: "--------", width: 274.1, gap: 9, tracking: 1.4 },
  { label: "SimTimeInSec:", value: "13.00", width: 254.2, gap: 7, tracking: -0.2 },
];

const Dots = () => (<><i /><i /><i /></>);

export default function App() {
  return (
    <Window>
      <GlobalStyle />
      <MenuBar>
        <span>Project</span>
        <span>Scenario</span>
        <span>Help</span>
      </MenuBar>
      <Body>
        <LeftPane>
          <RunBar>
            <RunButton $width={361} $gap={16}><StopIcon />Stop running scenarios</RunButton>
            <RunButton $width={181} $gap={16}><PlayIcon />Resume</RunButton>
            <RunButton $width={162} $gap={15}><PauseIcon />Pause</RunButton>
            <RunButton $width={110} $gap={17}><PlayIcon step />Step</RunButton>
          </RunBar>
          <Table $height={1168}>
            <HeadRow>
              <HeadCell>Scenario</HeadCell>
              <HeadCell>Status</HeadCell>
            </HeadRow>
            <Row>
              <Cell>bus_station</Cell>
              <Cell>Paused</Cell>
            </Row>
          </Table>
          <SplitHandle $size={10}><Dots /></SplitHandle>
          <Table $height={516}>
            <HeadRow>
              <HeadCell>Output files</HeadCell>
            </HeadRow>
          </Table>
          <ProgressRow>
            <span>Working...</span>
            <Progress />
          </ProgressRow>
        </LeftPane>
        <SplitHandle $vertical $size={6}><Dots /></SplitHandle>
        <RightPane>
          <TitleBar>
            <Dots />
            <span>bus_station</span>
          </TitleBar>
          <ToolBar>
            <SwarmIcon />
            <TrailsIcon />
            <WalkerIcon />
            <GroupsIcon />
            <ToolDivider />
            <VoronoiIcon />
            <NetworkIcon />
            <GridIcon />
            <GradientTile $fill="linear-gradient(#f00, #0f0)" />
            <ToolDivider />
            <CameraIcon />
            <GradientTile $fill="linear-gradient(53deg, #000 4%, #003380 40%, #66c8ff 71%)" />
            <RecordIcon />
            <Spacer />
            <GearIcon />
          </ToolBar>
          <Views>
            <Canvas>
              <Topography />
              <ScrollTrack><ScrollThumb /></ScrollTrack>
            </Canvas>
            <SplitHandle $vertical $size={10} $shift={2}><Dots /></SplitHandle>
            <Editor>
              <Gutter>1</Gutter>
              <Code><ActiveLine /></Code>
              <EditorScroll />
            </Editor>
          </Views>
          <StatusBar>
            {STATUS.map((s) => (
              <StatusItem key={s.label}>
                <StatusText $width={s.width} $gap={s.gap}>
                  <span>{s.label}</span>
                  <StatusValue $tracking={s.tracking}>{s.value}</StatusValue>
                </StatusText>
                <span>|</span>
              </StatusItem>
            ))}
          </StatusBar>
        </RightPane>
      </Body>
    </Window>
  );
}
